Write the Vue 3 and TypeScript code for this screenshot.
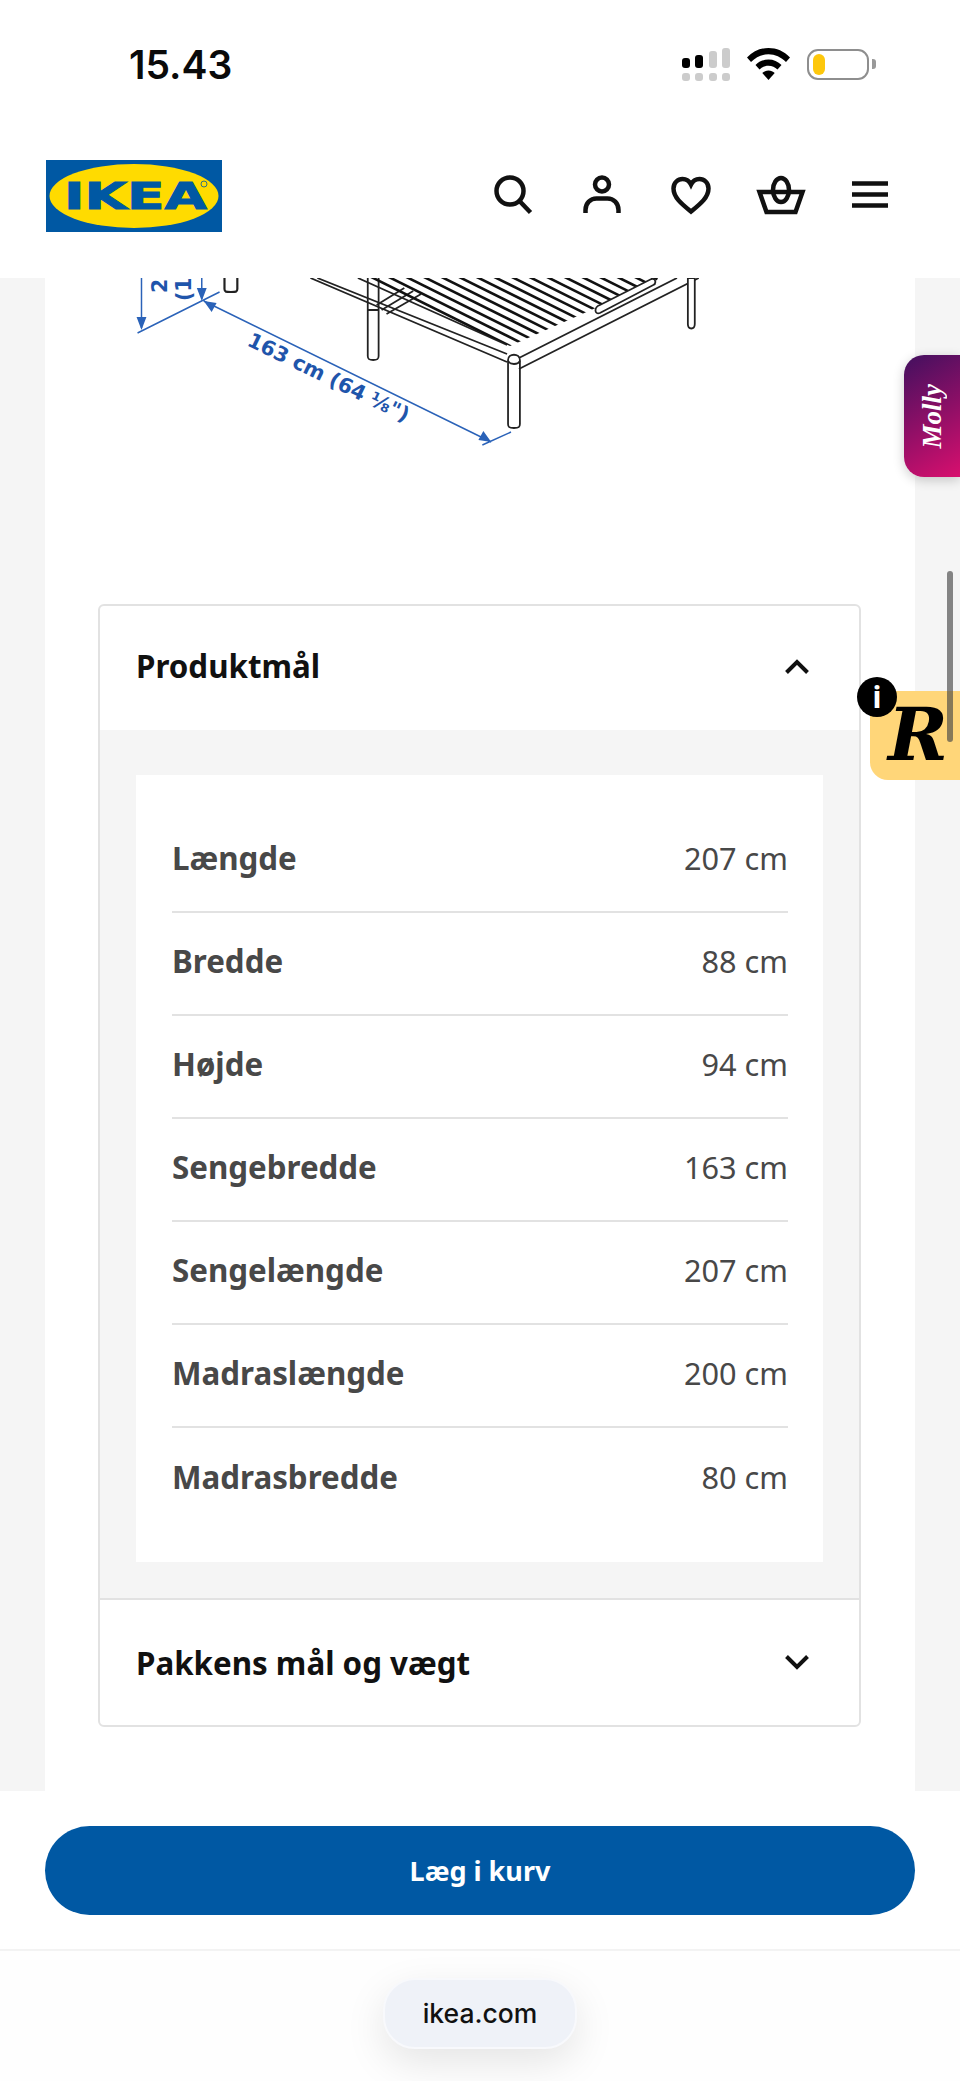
<script setup lang="ts">
interface Dimension {
  label: string;
  value: string;
}

const dimensions: Dimension[] = [
  { label: "Længde", value: "207 cm" },
  { label: "Bredde", value: "88 cm" },
  { label: "Højde", value: "94 cm" },
  { label: "Sengebredde", value: "163 cm" },
  { label: "Sengelængde", value: "207 cm" },
  { label: "Madraslængde", value: "200 cm" },
  { label: "Madrasbredde", value: "80 cm" },
];

// slats of the bed base, end points run along the right rail
const slats = Array.from({ length: 18 }, (_, i) => {
  const t = i / 17;
  const x2 = 478 + t * 150;
  const y2 = 72 - t * 75;
  return { x1: x2 - 240, y1: y2 - 118, x2, y2 };
});
</script>

<template>
  <div class="phone">
    <div class="status">
      <span class="time">15.43</span>
      <div class="status-icons">
        <svg class="signal" width="48" height="33" viewBox="0 0 48 33" aria-hidden="true">
          <rect x="0" y="10" width="8" height="10" rx="3" fill="#000" />
          <rect x="13" y="7" width="8" height="13" rx="3" fill="#000" />
          <rect x="27" y="3" width="8" height="17" rx="3" fill="#ccc" />
          <rect x="40" y="0" width="8" height="20" rx="3" fill="#ccc" />
          <rect x="0" y="25" width="8" height="8" rx="3" fill="#ccc" />
          <rect x="13" y="25" width="8" height="8" rx="3" fill="#ccc" />
          <rect x="27" y="25" width="8" height="8" rx="3" fill="#ccc" />
          <rect x="40" y="25" width="8" height="8" rx="3" fill="#ccc" />
        </svg>
        <svg class="wifi" width="43" height="32" viewBox="0 0 43 32" aria-hidden="true">
          <path d="M21.500 0C13.500 0 6 3 0 9.500l4 4.500C9 9 15 6.200 21.500 6.200S34 9 39 14l4-4.500C37 3 29.500 0 21.500 0z" fill="#000" />
          <path d="M21.500 11.500c-5 0-9.500 2-13 5.500l4 4.500c2.500-2.500 5.500-3.800 9-3.800s6.500 1.300 9 3.800l4-4.500c-3.500-3.500-8-5.500-13-5.500z" fill="#000" />
          <path d="M21.500 22.500c-2.500 0-4.500 1-6.200 2.500l6.200 7 6.200-7c-1.700-1.500-3.700-2.500-6.200-2.500z" fill="#000" />
        </svg>
        <div class="battery">
          <div class="battery-body"><span class="battery-fill"></span></div>
          <span class="battery-nub"></span>
        </div>
      </div>
    </div>

    <header class="topbar">
      <svg class="logo" width="176" height="72" viewBox="0 0 176 72" role="img" aria-label="IKEA">
        <rect width="176" height="72" fill="#0058a3" />
        <ellipse cx="88" cy="36" rx="84.500" ry="32" fill="#ffdb00" />
        <text x="18" y="48.500" textLength="143" lengthAdjust="spacingAndGlyphs" class="logo-text">IKEA</text>
        <circle cx="158" cy="24" r="3" fill="none" stroke="#0058a3" stroke-width="0.800" />
      </svg>
      <nav class="nav-icons">
        <svg class="nav-icon" viewBox="0 0 50 50" aria-hidden="true">
          <circle cx="22" cy="21" r="13.500" />
          <path d="M31.500 31l11 11.500" />
        </svg>
        <svg class="nav-icon" viewBox="0 0 50 50" aria-hidden="true">
          <circle cx="25" cy="14.500" r="7" />
          <path d="M8.500 43v-3c0-7 5-11.500 11-11.500h11c6 0 11 4.500 11 11.500v3" />
        </svg>
        <svg class="nav-icon" viewBox="0 0 50 50" aria-hidden="true">
          <path d="M25 41.500C17 35 7.500 28 7.500 18.500 7.500 12.500 12 9 16.500 9c3.800 0 6.800 2 8.500 5.500C26.700 11 29.700 9 33.500 9 38 9 42.500 12.500 42.500 18.500 42.500 28 33 35 25 41.500z" />
        </svg>
        <svg class="nav-icon" viewBox="0 0 50 50" aria-hidden="true">
          <path d="M3.500 22h43l-7 20h-29z" />
          <ellipse cx="25" cy="20" rx="8" ry="12" />
        </svg>
        <svg class="nav-icon" viewBox="0 0 50 50" aria-hidden="true">
          <path class="square" d="M7 13.500h36M7 24.500h36M7 35.500h36" />
        </svg>
      </nav>
    </header>

    <main class="page">
      <section class="sheet">
        <svg class="drawing" width="870" height="176" viewBox="0 0 870 176" aria-hidden="true">
          <defs>
            <clipPath id="deck">
              <path d="M316 0L470 68 625 0z" />
            </clipPath>
          </defs>
          <g class="blue-lines" transform="translate(0.660 0) scale(0.988 1)">
            <path d="M97 0v50M93 55L176 14M158 0v21M160 23L451 164M442 167L471 154" />
            <path class="arrow" d="M97 52l-5-13h10zM158 23l-5-13h10zM160 23l13 2-5 9zM451 164l-13-2 5-9z" />
          </g>
          <text class="dim" transform="translate(122 15) rotate(-90)">2</text>
          <text class="dim" transform="translate(146 23) rotate(-90)">(1</text>
          <text class="dim" transform="translate(201 67) rotate(25.900)">163 cm (64 ⅛")</text>
          <g class="bed-lines" transform="translate(0.660 0) scale(0.988 1)">
            <path class="thick" d="M181 0v11c0 3 1.500 3 6.500 3s6.500 0 6.500-3V0" />
            <path d="M275 0L467 76M268 0L467 84M316 0L467 67" />
            <path d="M326 0v78c0 3 1 4 5.500 4s5.500-1 5.500-4V0M326 32h11" />
            <path d="M335 27L363 10M340 32L372 13M345 36L380 16" />
            <path class="leg" d="M468 82v64c0 3 1 4 6 4s6-1 6-4V82c0-7-12-7-12 0z" />
            <path d="M468 83c2 4 10 4 12 0" />
            <path d="M479 80L639 0M479 91L661 0" />
            <path class="leg" d="M650 5v41c0 6 7 6 7 0V0h-7z" />
            <g clip-path="url(#deck)" class="slats">
              <line v-for="(slat, i) in slats" :key="i" :x1="slat.x1" :y1="slat.y1" :x2="slat.x2" :y2="slat.y2" />
            </g>
            <path class="roller" d="M561 27L613 1c5-1 5 5 2 6L561 35c-6 2-6-6 0-8z" />
          </g>
        </svg>

        <div class="accordion">
          <button class="acc-head" type="button">
            <span>Produktmål</span>
            <svg width="24" height="15" viewBox="0 0 24 15" aria-hidden="true"><path d="M1.500 13.500L12 3l10.500 10.500" /></svg>
          </button>
          <div class="acc-body">
            <dl class="dim-table">
              <div v-for="row in dimensions" :key="row.label" class="dim-row">
                <dt>{{ row.label }}</dt>
                <dd>{{ row.value }}</dd>
              </div>
            </dl>
          </div>
          <button class="acc-head second" type="button">
            <span>Pakkens mål og vægt</span>
            <svg width="24" height="15" viewBox="0 0 24 15" aria-hidden="true"><path d="M1.500 1.500L12 12 22.500 1.500" /></svg>
          </button>
        </div>
      </section>

      <div class="molly"><span>Molly</span></div>
      <div class="scroll-thumb"></div>
      <div class="retail">
        <span class="retail-r">R</span>
        <span class="retail-info">i</span>
      </div>
    </main>

    <div class="buy">
      <button class="buy-btn" type="button">Læg i kurv</button>
    </div>
    <div class="browser">
      <div class="url">ikea.com</div>
    </div>
  </div>
</template>

<style scoped>
.phone {
  width: 960px;
  height: 2081px;
  display: flex;
  flex-direction: column;
  background: #fff;
  font-family: "Noto Sans", sans-serif;
  overflow: hidden;
}

.status {
  height: 120px;
  flex-shrink: 0;
  display: flex;
  justify-content: space-between;
  padding: 0 84px 0 129px;
  box-sizing: border-box;
}

.time {
  font-family: Inter, sans-serif;
  font-size: 39px;
  font-weight: 600;
  line-height: 46px;
  margin-top: 42px;
  color: #0a0a0a;
}

.status-icons {
  display: flex;
  align-items: flex-start;
  padding-top: 48px;
}

.wifi {
  margin-left: 17px;
}

.battery {
  display: flex;
  align-items: center;
  margin-left: 17px;
  height: 32px;
}

.battery-body {
  width: 62px;
  height: 31px;
  border: 2px solid #8e8e8e;
  border-radius: 11px;
  box-sizing: border-box;
  padding: 3px 4px;
}

.battery-fill {
  display: block;
  width: 12px;
  height: 100%;
  border-radius: 6px;
  background: #fdc70c;
}

.battery-nub {
  width: 4px;
  height: 10px;
  margin-left: 3px;
  border-radius: 0 3px 3px 0;
  background: #999;
}

.topbar {
  height: 158px;
  flex-shrink: 0;
  display: flex;
  align-items: flex-start;
  justify-content: space-between;
  padding: 40px 65px 0 46px;
  box-sizing: border-box;
  background: #fff;
  position: relative;
  z-index: 2;
}

.logo-text {
  font-family: "DejaVu Sans", sans-serif;
  font-size: 37px;
  font-weight: 700;
  fill: #0058a3;
  stroke: #0058a3;
  stroke-width: 1px;
}

.nav-icons {
  display: flex;
  gap: 39.300px;
  margin-top: 10px;
}

.nav-icon {
  width: 50px;
  height: 50px;
  fill: none;
  stroke: #111;
  stroke-width: 4.500;
}

.page {
  position: relative;
  flex: 1;
  min-height: 0;
  background: #f5f5f5;
  overflow: hidden;
}

.sheet {
  height: 100%;
  margin: 0 45px;
  background: #fff;
}

.drawing {
  display: block;
  margin-bottom: 150px;
}

.blue-lines {
  fill: none;
  stroke: #2a62b8;
  stroke-width: 1.500;
}

.blue-lines .arrow {
  fill: #2a62b8;
  stroke: none;
}

.dim {
  font-family: "DejaVu Sans", sans-serif;
  font-size: 20.500px;
  font-weight: 700;
  fill: #1f55ab;
}

.bed-lines {
  fill: none;
  stroke: #222;
  stroke-width: 1.800;
}

.bed-lines .thick {
  stroke-width: 2.200;
}

.bed-lines .leg,
.bed-lines .roller {
  fill: #fff;
}

.slats {
  stroke: #111;
  stroke-width: 2.600;
}

.accordion {
  margin: 0 54px 0 53px;
  border: 2px solid #e2e2e2;
  border-radius: 6px;
  background: #fff;
}

.acc-head {
  width: 100%;
  height: 124px;
  display: flex;
  align-items: center;
  justify-content: space-between;
  padding: 0 50px 4px 36px;
  box-sizing: border-box;
  border: 0;
  background: transparent;
  font: 700 31.300px "Noto Sans", sans-serif;
  color: #111;
}

.acc-head svg {
  fill: none;
  stroke: #111;
  stroke-width: 4;
}

.acc-head.second {
  height: 127px;
  padding-bottom: 0;
  border-top: 2px solid #e2e2e2;
}

.acc-body {
  padding: 45px 36px 36px;
  background: #f5f5f5;
}

.dim-table {
  margin: 0;
  padding: 35px 35px 31px 36px;
  background: #fff;
}

.dim-row {
  height: 103px;
  display: flex;
  align-items: center;
  justify-content: space-between;
  padding-bottom: 6px;
  box-sizing: border-box;
  border-bottom: 2px solid #e2e2e2;
}

.dim-row:last-child {
  border-bottom: 0;
}

.dim-row dt {
  font-size: 31.300px;
  font-weight: 700;
  color: #484848;
}

.dim-row dd {
  margin: 0;
  font-size: 30.700px;
  color: #484848;
}

.molly {
  position: absolute;
  top: 77px;
  right: 0;
  width: 56px;
  height: 122px;
  display: flex;
  align-items: center;
  justify-content: center;
  border-radius: 20px 0 0 20px;
  background: linear-gradient(150deg, #42105f 0%, #8c0f66 50%, #d80f6e 100%);
  box-shadow: 0 3px 12px rgba(0, 0, 0, 0.2);
}

.molly span {
  writing-mode: vertical-rl;
  transform: rotate(180deg);
  font: italic 700 27px "Liberation Serif", serif;
  color: #fff;
}

.scroll-thumb {
  position: absolute;
  top: 293px;
  right: 7px;
  width: 6px;
  height: 171px;
  border-radius: 3px;
  background: rgba(70, 70, 70, 0.65);
  z-index: 2;
}

.retail {
  position: absolute;
  top: 413px;
  right: 0;
  width: 90px;
  height: 89px;
  border-radius: 0 0 0 18px;
  background: #ffd679;
}

.retail-r {
  position: absolute;
  left: 18px;
  top: 6px;
  font: italic 700 72px/76px "DejaVu Serif", serif;
  color: #000;
}

.retail-info {
  position: absolute;
  left: -13px;
  top: -14px;
  width: 40px;
  height: 40px;
  border-radius: 50%;
  background: #000;
  color: #fff;
  font: 700 30px/40px "Noto Sans", sans-serif;
  text-align: center;
}

.buy {
  height: 160px;
  flex-shrink: 0;
  padding: 35px 45px 0;
  box-sizing: border-box;
  background: #fff;
  border-bottom: 2px solid #f3f3f3;
}

.buy-btn {
  width: 100%;
  height: 89px;
  border: 0;
  border-radius: 45px;
  background: #0058a3;
  color: #fff;
  font: 700 27px "Noto Sans", sans-serif;
}

.browser {
  height: 130px;
  flex-shrink: 0;
  display: flex;
  justify-content: center;
  padding-top: 27px;
  box-sizing: border-box;
  background: #fefefe;
}

.url {
  width: 194px;
  height: 71px;
  border: 2px solid #f8f9fc;
  border-radius: 32px;
  box-sizing: border-box;
  background: #eff2f8;
  box-shadow: 0 14px 40px rgba(0, 0, 0, 0.1);
  color: #111;
  font: 500 26.500px/67px Inter, sans-serif;
  text-align: center;
}
</style>

<style>
body {
  background: #fff;
}
</style>
